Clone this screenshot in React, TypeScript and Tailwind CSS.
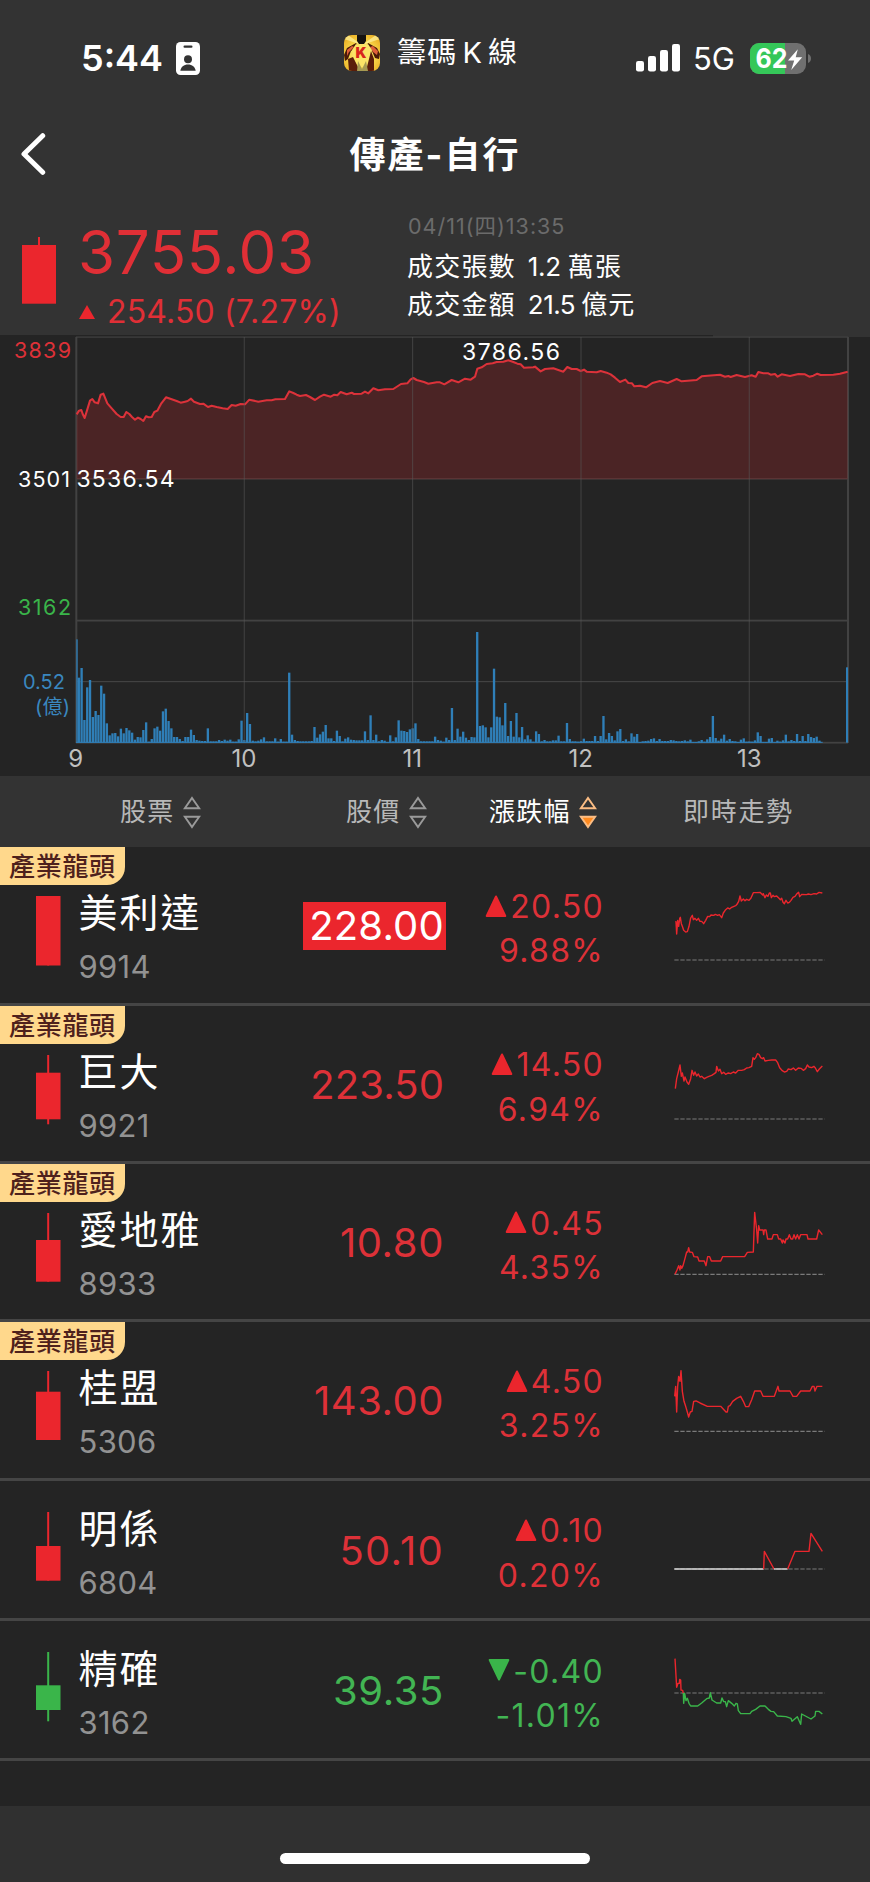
import React from "react";

const RED = "#eb262d";
const GREEN = "#3ab54a";

const PRICE_LINE =
  "230,283 237,272 244,270 248,282 254,294 262,268 270,242 277,237 284,247 294,250 302,224 310,221 322,250 335,265 350,282 362,291 371,291 379,276 388,282 396,291 405,299 414,293 422,297 430,303 438,289 446,292 455,291 463,276 472,272 484,250 498,232 515,238 530,243 542,248 555,245 563,243 573,236 582,245 600,252 610,251 624,261 635,257 650,261 668,265 683,267 695,255 707,257 722,252 735,253 748,239 775,245 800,241 815,241 826,238 855,237 868,214 880,219 890,224 900,228 918,225 930,231 945,240 960,230 972,224 992,230 1003,224 1012,226 1022,216 1040,223 1055,218 1062,222 1085,221 1095,215 1105,220 1120,205 1135,211 1155,208 1180,207 1203,192 1222,190 1232,178 1240,174 1250,180 1272,186 1285,191 1310,187 1320,187 1333,193 1355,180 1375,187 1395,176 1412,179 1425,170 1432,146 1445,142 1460,132 1478,130 1490,126 1510,125 1525,121 1540,126 1552,131 1562,133 1572,143 1600,142 1605,140 1622,154 1635,147 1660,145 1690,155 1702,141 1715,147 1730,147 1742,153 1752,149 1760,155 1790,157 1802,153 1820,158 1832,163 1845,173 1860,186 1876,179 1885,189 1896,190 1903,199 1920,197 1938,202 1957,189 1980,183 2003,189 2030,177 2045,184 2090,180 2105,169 2160,164 2175,170 2185,168 2192,171 2210,165 2235,171 2255,166 2267,170 2275,156 2290,160 2305,160 2312,164 2325,162 2333,170 2345,163 2370,168 2395,162 2415,163 2428,170 2440,167 2452,161 2462,165 2500,164 2520,161 2543,155";

// one entry per minute, from 09:00
const VOLUMES = [
  310, 195, 224, 68, 166, 188, 77, 95, 83, 171, 147, 58, 22, 28, 29, 19, 42, 28, 44, 37, 30, 9, 17, 16, 38, 61, 3, 11, 43, 48,
  36, 94, 102, 65, 43, 17, 17, 11, 5, 17, 17, 39, 23, 8, 6, 5, 5, 43, 4, 4, 4, 8, 5, 9, 6, 9, 3, 3, 10, 66,
  8, 89, 56, 6, 4, 6, 10, 16, 4, 4, 4, 13, 3, 11, 3, 3, 210, 24, 8, 5, 4, 4, 4, 4, 5, 47, 15, 25, 33, 53,
  13, 13, 5, 36, 20, 4, 12, 16, 9, 8, 7, 7, 7, 34, 8, 82, 8, 24, 4, 8, 6, 2, 22, 4, 16, 67, 36, 35, 32, 40,
  43, 58, 11, 4, 4, 4, 4, 4, 18, 8, 6, 3, 15, 8, 104, 8, 42, 18, 33, 15, 8, 17, 16, 332, 50, 52, 46, 16, 46, 222,
  78, 76, 52, 119, 20, 65, 18, 89, 16, 47, 10, 22, 10, 3, 34, 26, 4, 8, 4, 4, 7, 7, 21, 4, 4, 59, 11, 4, 4, 3,
  5, 12, 5, 5, 5, 20, 5, 20, 80, 10, 29, 20, 7, 34, 41, 5, 10, 4, 28, 18, 26, 2, 4, 5, 6, 11, 13, 5, 11, 5,
  5, 5, 8, 7, 5, 4, 5, 7, 4, 9, 2, 2, 4, 8, 3, 10, 17, 80, 14, 6, 12, 24, 6, 11, 5, 4, 2, 9, 13, 3,
  4, 3, 7, 31, 20, 2, 2, 12, 14, 1, 6, 3, 7, 24, 4, 8, 5, 26, 5, 20, 5, 26, 17, 14, 18, 6, 0, 0, 0, 0,
];

type Segment = { color: string; points: string };
type Stock = {
  name: string;
  code: string;
  leader: boolean;
  limit?: boolean;
  price: string;
  priceClass: string;
  change: string;
  percent: string;
  up: boolean;
  candle: [number, number, number];
  viewBox: string;
  base: number;
  lines: Segment[];
};

const STOCKS: Stock[] = [
  {
    name: "美利達", code: "9914", leader: true, limit: true, price: "228.00", priceClass: "tracking-[0.2px]", change: "20.50", percent: "9.88%", up: true,
    candle: [0, 69.5, 69.5], viewBox: "717 232 456 475", base: 571,
    lines: [{ color: RED, points: "721,458 723,456 725,493 728,452 731,470 734,447 736,443 739,462 742,470 746,482 752,487 757,486 762,470 767,445 772,437 775,450 780,446 785,452 790,446 795,455 800,455 806,462 812,452 818,440 824,441 828,436 836,437 841,434 848,437 853,435 860,444 865,430 872,420 878,415 884,418 890,413 897,410 902,408 906,404 911,395 915,379 919,394 925,388 930,393 935,389 942,392 948,385 955,369 965,369 975,368 983,376 985,372 990,384 994,376 999,380 1003,370 1006,370 1009,384 1014,377 1018,381 1025,379 1032,386 1036,390 1040,386 1044,398 1048,402 1053,392 1058,400 1063,398 1068,392 1074,383 1080,380 1086,372 1091,368 1094,381 1100,374 1115,375 1120,373 1128,375 1137,372 1145,373 1152,368 1162,370" }],
  },
  {
    name: "巨大", code: "9921", leader: true, price: "223.50", priceClass: "tracking-[0.1px]", change: "14.50", percent: "6.94%", up: true,
    candle: [17.7, 64.3, 69.3], viewBox: "717 707 456 475", base: 1046,
    lines: [{ color: RED, points: "721,955 725,925 730,905 735,884 739,918 742,908 747,932 750,920 756,935 761,942 767,925 771,900 776,915 780,905 785,917 790,911 795,920 800,918 808,925 815,921 820,919 830,915 838,910 843,906 845,888 850,902 855,897 860,910 866,906 872,912 880,908 887,910 895,905 902,908 910,900 920,900 928,898 935,893 942,892 950,888 954,862 958,867 962,862 967,850 972,852 977,862 982,865 986,862 990,872 1000,870 1010,869 1022,869 1028,877 1034,892 1042,901 1048,905 1055,903 1060,896 1068,898 1075,893 1082,900 1090,893 1098,894 1105,900 1112,895 1117,884 1122,890 1130,892 1137,888 1141,893 1147,904 1153,896 1162,887" }],
  },
  {
    name: "愛地雅", code: "8933", leader: true, price: "10.80", priceClass: "tracking-[0.6px]", change: "0.45", percent: "4.35%", up: true,
    candle: [27, 68.7, 68.7], viewBox: "717 12 456 475", base: 343,
    lines: [{ color: RED, points: "720,343 726,330 731,317 735,330 737,317 740,325 744,317 750,295 755,276 758,276 761,263 764,276 772,277 777,290 788,291 792,303 808,303 813,317 818,290 824,290 829,303 857,303 863,290 929,290 937,277 955,276 959,157 965,210 968,249 971,197 974,210 984,210 986,224 988,210 993,210 998,237 1011,237 1015,224 1027,224 1031,237 1037,237 1042,249 1044,240 1050,249 1053,237 1058,237 1063,224 1068,237 1073,237 1077,224 1082,237 1087,224 1092,237 1097,224 1116,224 1119,237 1145,237 1151,210 1162,224" }],
  },
  {
    name: "桂盟", code: "5306", leader: true, price: "143.00", priceClass: "tracking-[0.5px]", change: "4.50", percent: "3.25%", up: true,
    candle: [20.7, 69, 69], viewBox: "717 487 456 475", base: 815,
    lines: [{ color: RED, points: "719,710 722,680 725,757 728,680 731,650 735,665 738,633 742,695 747,725 752,740 757,757 761,772 766,757 771,755 776,725 783,724 795,730 817,740 857,740 873,757 877,757 880,740 885,738 893,725 905,716 917,710 925,725 932,741 941,741 950,720 959,694 977,694 984,710 1018,710 1029,680 1032,694 1065,694 1074,710 1085,710 1097,694 1125,694 1132,680 1137,680 1140,694 1146,680 1162,680" }],
  },
  {
    name: "明係", code: "6804", leader: false, price: "50.10", priceClass: "tracking-[1.3px]", change: "0.10", percent: "0.20%", up: true,
    candle: [34, 68.7, 68.7], viewBox: "717 32 456 421", base: 296,
    lines: [
      { color: "#d8d8d8", points: "718,296 986,296" },
      { color: RED, points: "986,296 988,243 1017,296" },
      { color: "#d8d8d8", points: "1017,296 1058,296" },
      { color: RED, points: "1058,296 1080,243 1122,243 1128,189 1162,243" },
    ],
  },
  {
    name: "精確", code: "3162", leader: false, price: "39.35", priceClass: "tracking-[0.6px]", change: "-0.40", percent: "-1.01%", up: false,
    candle: [33.3, 58, 69.3], viewBox: "717 453 456 421", base: 669,
    lines: [
      { color: RED, points: "720,566 725,652 729,640 733,640 734,628 737,630 738,660 743,661 745,670" },
      { color: GREEN, points: "745,669 746,700 749,670 753,692 757,685 762,700 767,708 788,708 800,699 815,686 823,684 826,668 831,690 845,699 857,699 861,684 866,695 871,695 875,710 880,692 890,700 898,708 903,700 907,702 910,722 917,731 945,731 950,724 962,718 975,708 990,708 1000,718 1008,724 1016,725 1027,738 1053,740 1068,745 1071,754 1087,740 1097,763 1100,732 1128,747 1140,738 1142,724 1152,724 1162,732" },
    ],
  },
];

function AppIcon() {
  return (
    <svg width="36" height="36" viewBox="0 0 36 36">
      <defs>
        <clipPath id="iconClip"><rect width="36" height="36" rx="8" /></clipPath>
        <radialGradient id="iconGlow" cx="50%" cy="55%" r="60%">
          <stop offset="0" stopColor="#fff6a8" />
          <stop offset="0.6" stopColor="#f7d64a" />
          <stop offset="1" stopColor="#eeb62a" />
        </radialGradient>
      </defs>
      <g clipPath="url(#iconClip)">
        <rect width="36" height="36" fill="url(#iconGlow)" />
        <path d="M18 10 0 4V0h4zM18 10 32 0h4v4z" fill="#fff3a0" opacity="0.7" />
        <path d="M3 13 12 8l2 3-7 5-3 8-3 2-1-6zM33 13l-9-5-1 3 5 5 3 7 4 1 1-5z" fill="#4a1a08" />
        <path d="M3 15l5-4 2 1-5 5-2 4zM26 12l3-1 5 5-1 4-4-3z" fill="#e0603a" />
        <path d="M12 9l6 2 6-2 4 6-3 10-3 7h-8l-4-8-2-9z" fill="#fbe467" />
        <path d="M13 0h9v6l-2 3h-5l-2-3z" fill="#151210" />
        <path d="M4 24l5-2 7 14H5zM24 28l3-12 3 8v12h-8z" fill="#5a1d0a" />
        <path d="M14 26l4 8 4-8 2 10H13z" fill="#a69a52" />
        <text x="17" y="22.5" textAnchor="middle" fontFamily="Inter, sans-serif" fontWeight="900" fontSize="14.5" fill="#d8261c">K</text>
      </g>
    </svg>
  );
}

function StatusBar() {
  return (
    <div className="flex h-[116px] items-center">
      <div className="flex w-[344px] items-center pl-[81px]">
        <span className="w-[95px] text-[36px] leading-[40px] font-semibold">5:44</span>
        <svg width="24" height="33" viewBox="0 0 24 33" className="mt-px">
          <rect width="24" height="33" rx="4.5" fill="#fff" />
          <rect x="7.5" y="3.6" width="9" height="2.2" rx="1.1" fill="#333" />
          <circle cx="12" cy="17.3" r="4" fill="#333" />
          <path d="M4.3 28.8c.6-4 3.6-6.3 7.7-6.3s7.1 2.300 7.700 6.300z" fill="#333" />
        </svg>
      </div>
      <div className="flex w-[292px] items-center pb-[10px]">
        <AppIcon />
        <span className="ml-[17px] text-[29px] leading-[36px] tracking-[1.200px] whitespace-nowrap">籌碼<span className="mr-[6px] ml-[5px] tracking-normal">K</span>線</span>
      </div>
      <svg width="44" height="28" viewBox="0 0 44 28" fill="#fff">
        <rect x="0" y="17" width="8" height="10.500" rx="2.200" />
        <rect x="12" y="12" width="8" height="15.500" rx="2.200" />
        <rect x="24" y="6" width="8" height="21.500" rx="2.200" />
        <rect x="36" y="0" width="8" height="27.500" rx="2.200" />
      </svg>
      <span className="ml-[13px] w-[57px] pt-px text-[31px] leading-[36px]">5G</span>
      <svg width="62" height="31" viewBox="0 0 62 31">
        <defs><clipPath id="battery"><rect width="56" height="31" rx="9" /></clipPath></defs>
        <g clipPath="url(#battery)">
          <rect width="56" height="31" fill="#707070" />
          <rect width="35" height="31" fill="#35c759" />
        </g>
        <path d="M58 11c2 .8 3 2.500 3 4.500s-1 3.700-3 4.500z" fill="#707070" />
        <text x="5.500" y="25.300" fontFamily="Inter, sans-serif" fontWeight="700" fontSize="27" textLength="32" lengthAdjust="spacingAndGlyphs" fill="#fff">62</text>
        <path d="M47.800 6.200 38 17.500h6.200l-3 9.500 11-12.800h-6.500z" fill="#fff" />
      </svg>
    </div>
  );
}

function TitleBar() {
  return (
    <div className="flex h-[76px] items-center">
      <svg width="26" height="44" viewBox="0 0 26 44" className="ml-5 shrink-0" fill="none" stroke="#fff" strokeWidth="5" strokeLinecap="round" strokeLinejoin="round">
        <path d="M22.700 3.700 4 22l18.700 18.300" />
      </svg>
      <h1 className="flex-1 pt-[2px] pr-[46px] text-center text-[36px] leading-[44px] font-bold tracking-[2px]">傳產-自行</h1>
    </div>
  );
}

function Quote() {
  return (
    <div className="flex h-[143px]">
      <svg width="34" height="67" viewBox="0 0 34 67" className="mt-[45px] ml-[22px] shrink-0" fill={RED}>
        <rect x="16" y="0" width="2" height="9" />
        <rect x="0" y="8" width="34" height="58.700" />
      </svg>
      <div className="w-[350px] pt-[30px] pl-[22px] text-[#e02f36]">
        <div className="text-[60px] leading-[60px] tracking-[0.600px]">3755.03</div>
        <div className="mt-[14px] flex items-center text-[32px] leading-[32px] tracking-[0.150px]">
          <svg width="16" height="14" viewBox="0 0 16 14" className="mr-[12px] ml-px" fill={RED}><path d="M8 0l8 14H0z" /></svg>
          254.50 (7.27%)
        </div>
      </div>
      <div className="pt-[22px] pl-px text-[26px] leading-[38px]">
        <div className="mb-[10px] pl-px text-[21.500px] leading-[24px] tracking-[1px] text-[#6b6b6b]">04/11(四)13:35</div>
        <div className="flex tracking-[1.200px]">成交張數<span className="ml-[12px] tracking-[-0.300px]">1.2</span><span className="ml-[7px]">萬張</span></div>
        <div className="flex tracking-[1.200px]">成交金額<span className="ml-[12px] tracking-[-0.500px]">21.5</span><span className="ml-[6px]">億元</span></div>
      </div>
    </div>
  );
}

function IntradayChart() {
  return (
    <svg width="870" height="441" viewBox="0 335 870 441" className="block" fontFamily="Inter, 'Noto Sans CJK TC', sans-serif">
      <rect x="713" y="335" width="157" height="2" fill="#333" />
      <g fill="#424242">
        <rect x="76" y="336.500" width="772" height="1.200" />
        <rect x="75.300" y="337" width="2" height="406" />
        <rect x="847" y="337" width="2" height="406" />
        <rect x="76" y="619.700" width="772" height="1.800" />
        <rect x="76" y="681" width="772" height="1.200" />
        <rect x="76" y="741.800" width="772" height="1.800" />
        <rect x="76" y="478.300" width="772" height="1.200" />
      </g>
      <g transform="translate(0 320) scale(0.33333)">
        <polygon points={`230,478 ${PRICE_LINE} 2543,478`} fill={RED} fillOpacity="0.2" />
        <polyline points={PRICE_LINE} fill="none" stroke="#dc323a" strokeWidth="6.200" strokeLinejoin="round" />
        <g fill="#2f7fb8">
          {VOLUMES.map((v, i) => (
            <rect key={i} x={i === 0 ? 229 : 224.5 + 8.417 * i} y={1268 - v} width={i === 0 ? 4 : 7} height={v} />
          ))}
          <rect x="2538" y="1042" width="6" height="226" />
          <rect x="228" y="1265.500" width="2240" height="3" />
        </g>
      </g>
      <g fill="#575757" fillOpacity="0.5">
        {[244.300, 412.600, 581, 749.300].map((x) => (
          <rect key={x} x={x - 0.6} y="337" width="1.200" height="405" />
        ))}
      </g>
      <g fontSize="21.500">
        <text x="14" y="358" fill="#dd3138" textLength="57">3839</text>
        <text x="18" y="486.500" fill="#fff" textLength="52">3501</text>
        <text x="18" y="615.300" fill={GREEN} textLength="53">3162</text>
        <text x="23" y="689" fontSize="20" fill="#3a87bf" textLength="42">0.52</text>
        <text x="35" y="714" fontSize="20" fill="#3a87bf" textLength="35">(億)</text>
      </g>
      <g fontSize="23" fill="#fff">
        <text x="76.500" y="487.300" textLength="98">3536.54</text>
        <text x="462" y="360.300" textLength="98">3786.56</text>
      </g>
      <g fontSize="24" fill="#c0c0c0" textAnchor="middle">
        <text x="75.700" y="767">9</text>
        <text x="244" y="767">10</text>
        <text x="412.300" y="767">11</text>
        <text x="580.800" y="767">12</text>
        <text x="749.200" y="767">13</text>
      </g>
    </svg>
  );
}

function SortIcon({ active = false }: { active?: boolean }) {
  const stroke = active ? "#fbbd84" : "#9a9a9a";
  return (
    <svg width="18" height="33" viewBox="0 0 18 33" fill="none" stroke={stroke} strokeWidth="2">
      <path d="M9 2 16.200 12.300H1.800z" />
      <path d="M9 31 16.200 20.700H1.800z" fill={active ? "#ff8a1f" : "none"} />
    </svg>
  );
}

function TableHead() {
  return (
    <div className="flex h-[71.33px] items-center bg-[#333] pt-px text-[26px] leading-[36px] tracking-[1.200px] text-[#b8b8b8]">
      <div className="flex w-[302px] items-center gap-[9px] pl-[120px]">股票<SortIcon /></div>
      <div className="flex w-[187px] items-center gap-[9px] pl-[44px]">股價<SortIcon /></div>
      <div className="flex w-[194px] items-center gap-[8px] text-white">漲跌幅<SortIcon active /></div>
      <div className="tracking-[1.700px]">即時走勢</div>
    </div>
  );
}

function Candle({ candle: [top, bottom, low], up }: { candle: [number, number, number]; up: boolean }) {
  return (
    <svg width="24.500" height="70" viewBox="0 0 24.500 70" className="mt-[31px] ml-[36px] shrink-0" fill={up ? RED : GREEN}>
      <rect x="11.200" y="0" width="2" height={low} />
      <rect x="0" y={top} width="24.500" height={bottom - top} />
    </svg>
  );
}

function StockRow({ s }: { s: Stock }) {
  const tone = s.up ? "text-[#dd3138]" : "text-[#42b553]";
  return (
    <div className={s.leader ? "relative flex h-[158.33px] border-b-[3px] border-[#454545]" : "relative flex h-[140.33px] border-b-[3px] border-[#454545]"}>
      {s.leader && (
        <div className="absolute top-0 left-0 h-[38px] w-[125px] rounded-br-[18px] bg-[#ffd88c] pl-[9px] text-[26px] leading-[40px] font-medium tracking-[0.700px] text-[#4e211c]">產業龍頭</div>
      )}
      <div className={s.leader ? "flex w-[303px] pt-[18px]" : "flex w-[303px]"}>
        <Candle candle={s.candle} up={s.up} />
        <div className="pt-[24px] pl-[18px]">
          <div className="text-[39px] leading-[48px] tracking-[2px]">{s.name}</div>
          <div className="mt-[12px] text-[31px] leading-[36px] tracking-[0.300px] text-[#929292]">{s.code}</div>
        </div>
      </div>
      <div className="flex w-[143px] items-center pt-[3px]">
        <div className={`h-[48px] w-full pr-[2px] text-right text-[40px] leading-[48px] ${s.priceClass} ${s.limit ? "bg-[#eb262d] text-white" : tone}`}>{s.price}</div>
      </div>
      <div className={`flex w-[158px] flex-col items-end justify-center pt-[9px] text-[32px] leading-[44.500px] tracking-[1.300px] ${tone}`}>
        <div className="flex items-center">
          <svg width="22" height="22" viewBox="0 0 22 22" className={s.up ? "mr-[3px] mb-[3px]" : "mr-[3px] mb-[3px] rotate-180"} fill={s.up ? RED : GREEN} stroke={s.up ? RED : GREEN} strokeWidth="2" strokeLinejoin="round">
            <path d="M11 1.500 20.300 21H1.700z" />
          </svg>
          {s.change}
        </div>
        <div>{s.percent}</div>
      </div>
      <svg viewBox={s.viewBox} className={s.leader ? "ml-[70px] h-[158.33px] w-[152px] shrink-0" : "ml-[70px] h-[140.33px] w-[152px] shrink-0"} fill="none">
        <line x1="718" x2="1169" y1={s.base} y2={s.base} stroke="#7a7a7a" strokeWidth="3.500" strokeDasharray="13 5" />
        {s.lines.map((l, i) => (
          <polyline key={i} points={l.points} stroke={l.color} strokeWidth="4.200" strokeLinejoin="round" />
        ))}
      </svg>
    </div>
  );
}

export default function App() {
  return (
    <div className="flex h-[1882px] w-[870px] flex-col overflow-hidden bg-[#242424] font-['Inter','Noto_Sans_CJK_TC',sans-serif] text-white">
      <header className="h-[335px] shrink-0 bg-[#333]">
        <StatusBar />
        <TitleBar />
        <Quote />
      </header>
      <IntradayChart />
      <TableHead />
      <main className="flex-1">
        {STOCKS.map((s) => (
          <StockRow key={s.code} s={s} />
        ))}
      </main>
      <footer className="flex h-[76px] shrink-0 items-end justify-center bg-[#303030] pb-[18px]">
        <div className="h-[11px] w-[310px] rounded-full bg-white" />
      </footer>
    </div>
  );
}
